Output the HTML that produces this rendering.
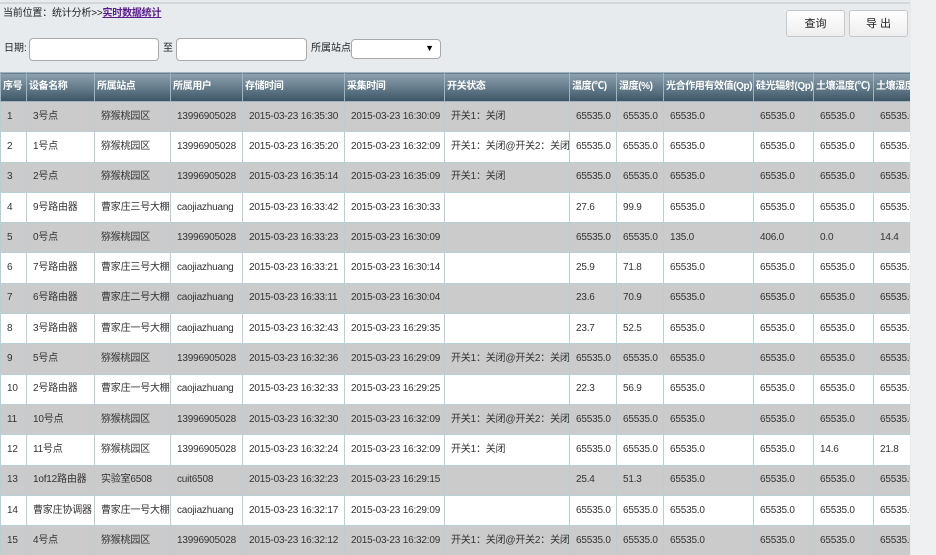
<!DOCTYPE html>
<html><head><meta charset="utf-8"><style>
body{margin:0;width:936px;height:555px;overflow:hidden;background:#e8ebee;font-family:"Liberation Sans","Noto Sans CJK SC",sans-serif;font-size:10px;color:#333;position:relative}
.topline{position:absolute;left:0;top:2px;width:910px;height:2px;background:#d4d7da}
.right{position:absolute;left:911px;top:0;width:25px;height:555px;background:#eef0f2}
.crumb{position:absolute;left:3px;top:7px;font-size:10px;color:#222;letter-spacing:-0.2px;line-height:14px}
.crumb a{color:#5a1a8a;font-weight:bold;text-decoration:underline}
.btn{position:absolute;top:10px;height:27px;width:59px;border:1px solid #c8c8c8;border-radius:3px;background:linear-gradient(#fff,#eee);font-size:11px;text-align:center;line-height:27px;color:#222;box-sizing:border-box}
.lbl{position:absolute;top:42px;font-size:10px;color:#222;line-height:14px}
.inp{position:absolute;top:38px;height:23px;border:1px solid #aaa;border-radius:4px;background:#fff;box-sizing:border-box}
.wrap{position:absolute;left:0;top:72px;width:910px;height:483px;overflow:hidden}
table{border-collapse:collapse;table-layout:fixed;width:960px}
th{height:28px;padding:0 0 0 2px;text-align:left;color:#fff;font-weight:bold;font-size:10px;letter-spacing:-0.4px;line-height:14px;background:linear-gradient(#8fa3b1,#5d7585 60%,#3d5464);border:1px solid #9fb5c0;white-space:nowrap;overflow:hidden}
td{height:29.3px;padding:0 0 0 6px;border:1px solid #b6d0d4;white-space:nowrap;overflow:hidden;letter-spacing:-0.2px;line-height:14px;vertical-align:middle}
tr:nth-child(odd) td{background:#cbcbcb}
tr:nth-child(even) td{background:#fff}
</style></head><body>
<div class="topline"></div><div class="right"></div>
<div class="crumb">当前位置：统计分析&gt;&gt;<a>实时数据统计</a></div>
<div class="btn" style="left:786px">查询</div>
<div class="btn" style="left:849px">导 出</div>
<div class="lbl" style="left:4px">日期:</div>
<div class="inp" style="left:29px;width:130px"></div>
<div class="lbl" style="left:163px">至</div>
<div class="inp" style="left:176px;width:131px"></div>
<div class="lbl" style="left:311px">所属站点</div>
<div class="inp" style="left:351px;width:90px;height:20px;top:39px"><span style="position:absolute;right:6px;top:3px;font-size:9px;color:#000">▼</span></div>
<div class="wrap"><table>
<colgroup><col style="width:26px"><col style="width:68px"><col style="width:76px"><col style="width:72px"><col style="width:102px"><col style="width:100px"><col style="width:125px"><col style="width:47px"><col style="width:47px"><col style="width:90px"><col style="width:60px"><col style="width:60px"><col style="width:87px"></colgroup>
<thead><tr><th>序号</th><th>设备名称</th><th>所属站点</th><th>所属用户</th><th>存储时间</th><th>采集时间</th><th>开关状态</th><th>温度(℃)</th><th>湿度(%)</th><th>光合作用有效值(Qp)</th><th>硅光辐射(Qp)</th><th>土壤温度(℃)</th><th>土壤湿度(%)</th></tr></thead>
<tbody>
<tr><td>1</td><td>3号点</td><td>猕猴桃园区</td><td>13996905028</td><td>2015-03-23 16:35:30</td><td>2015-03-23 16:30:09</td><td>开关1：关闭</td><td>65535.0</td><td>65535.0</td><td>65535.0</td><td>65535.0</td><td>65535.0</td><td>65535.0</td></tr>
<tr><td>2</td><td>1号点</td><td>猕猴桃园区</td><td>13996905028</td><td>2015-03-23 16:35:20</td><td>2015-03-23 16:32:09</td><td>开关1：关闭@开关2：关闭</td><td>65535.0</td><td>65535.0</td><td>65535.0</td><td>65535.0</td><td>65535.0</td><td>65535.0</td></tr>
<tr><td>3</td><td>2号点</td><td>猕猴桃园区</td><td>13996905028</td><td>2015-03-23 16:35:14</td><td>2015-03-23 16:35:09</td><td>开关1：关闭</td><td>65535.0</td><td>65535.0</td><td>65535.0</td><td>65535.0</td><td>65535.0</td><td>65535.0</td></tr>
<tr><td>4</td><td>9号路由器</td><td>曹家庄三号大棚</td><td>caojiazhuang</td><td>2015-03-23 16:33:42</td><td>2015-03-23 16:30:33</td><td></td><td>27.6</td><td>99.9</td><td>65535.0</td><td>65535.0</td><td>65535.0</td><td>65535.0</td></tr>
<tr><td>5</td><td>0号点</td><td>猕猴桃园区</td><td>13996905028</td><td>2015-03-23 16:33:23</td><td>2015-03-23 16:30:09</td><td></td><td>65535.0</td><td>65535.0</td><td>135.0</td><td>406.0</td><td>0.0</td><td>14.4</td></tr>
<tr><td>6</td><td>7号路由器</td><td>曹家庄三号大棚</td><td>caojiazhuang</td><td>2015-03-23 16:33:21</td><td>2015-03-23 16:30:14</td><td></td><td>25.9</td><td>71.8</td><td>65535.0</td><td>65535.0</td><td>65535.0</td><td>65535.0</td></tr>
<tr><td>7</td><td>6号路由器</td><td>曹家庄二号大棚</td><td>caojiazhuang</td><td>2015-03-23 16:33:11</td><td>2015-03-23 16:30:04</td><td></td><td>23.6</td><td>70.9</td><td>65535.0</td><td>65535.0</td><td>65535.0</td><td>65535.0</td></tr>
<tr><td>8</td><td>3号路由器</td><td>曹家庄一号大棚</td><td>caojiazhuang</td><td>2015-03-23 16:32:43</td><td>2015-03-23 16:29:35</td><td></td><td>23.7</td><td>52.5</td><td>65535.0</td><td>65535.0</td><td>65535.0</td><td>65535.0</td></tr>
<tr><td>9</td><td>5号点</td><td>猕猴桃园区</td><td>13996905028</td><td>2015-03-23 16:32:36</td><td>2015-03-23 16:29:09</td><td>开关1：关闭@开关2：关闭</td><td>65535.0</td><td>65535.0</td><td>65535.0</td><td>65535.0</td><td>65535.0</td><td>65535.0</td></tr>
<tr><td>10</td><td>2号路由器</td><td>曹家庄一号大棚</td><td>caojiazhuang</td><td>2015-03-23 16:32:33</td><td>2015-03-23 16:29:25</td><td></td><td>22.3</td><td>56.9</td><td>65535.0</td><td>65535.0</td><td>65535.0</td><td>65535.0</td></tr>
<tr><td>11</td><td>10号点</td><td>猕猴桃园区</td><td>13996905028</td><td>2015-03-23 16:32:30</td><td>2015-03-23 16:32:09</td><td>开关1：关闭@开关2：关闭</td><td>65535.0</td><td>65535.0</td><td>65535.0</td><td>65535.0</td><td>65535.0</td><td>65535.0</td></tr>
<tr><td>12</td><td>11号点</td><td>猕猴桃园区</td><td>13996905028</td><td>2015-03-23 16:32:24</td><td>2015-03-23 16:32:09</td><td>开关1：关闭</td><td>65535.0</td><td>65535.0</td><td>65535.0</td><td>65535.0</td><td>14.6</td><td>21.8</td></tr>
<tr><td>13</td><td>1of12路由器</td><td>实验室6508</td><td>cuit6508</td><td>2015-03-23 16:32:23</td><td>2015-03-23 16:29:15</td><td></td><td>25.4</td><td>51.3</td><td>65535.0</td><td>65535.0</td><td>65535.0</td><td>65535.0</td></tr>
<tr><td>14</td><td>曹家庄协调器</td><td>曹家庄一号大棚</td><td>caojiazhuang</td><td>2015-03-23 16:32:17</td><td>2015-03-23 16:29:09</td><td></td><td>65535.0</td><td>65535.0</td><td>65535.0</td><td>65535.0</td><td>65535.0</td><td>65535.0</td></tr>
<tr><td>15</td><td>4号点</td><td>猕猴桃园区</td><td>13996905028</td><td>2015-03-23 16:32:12</td><td>2015-03-23 16:32:09</td><td>开关1：关闭@开关2：关闭</td><td>65535.0</td><td>65535.0</td><td>65535.0</td><td>65535.0</td><td>65535.0</td><td>65535.0</td></tr>
</tbody></table></div>
</body></html>
